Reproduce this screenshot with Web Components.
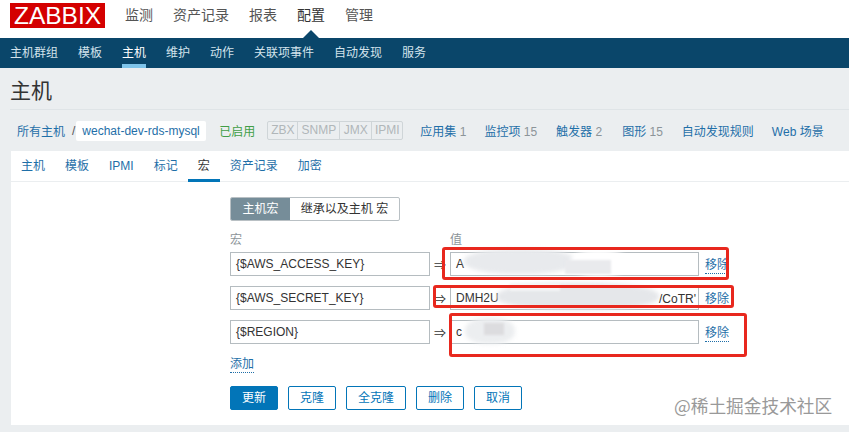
<!DOCTYPE html>
<html lang="zh"><head><meta charset="utf-8"><title>主机</title>
<style>
html,body{margin:0;padding:0;background:#ebeef0;font:12px "Liberation Sans","Noto Sans CJK SC",sans-serif;overflow:hidden}
body{width:849px;height:432px;position:relative}
</style></head><body>
<z-topbar></z-topbar>
<z-subnav></z-subnav>
<z-title>主机</z-title>
<z-crumbs></z-crumbs>
<z-card></z-card>
<z-marks></z-marks>
<script>
const FONT='"Liberation Sans","Noto Sans CJK SC",sans-serif';
class Base extends HTMLElement{
  constructor(){super();this.attachShadow({mode:'open'}).innerHTML=`<style>${this.css()}</style>${this.html()}`}
  css(){return ''} html(){return '<slot></slot>'}
}
customElements.define('z-topbar',class extends Base{
  css(){return `:host{display:flex;align-items:flex-start;height:38px;background:#fff;position:relative;font:14px ${FONT};color:#555}
  .logo{margin:3px 20px 0 10px;width:95px;height:25px;background:#d40000;color:#fff;font:24.5px/25px "Liberation Sans",sans-serif;text-align:center;overflow:hidden}
  nav{display:flex;gap:20px;line-height:20px;padding-top:5px}
  .on{color:#333}
  .tri{position:absolute;left:303px;top:30px;width:0;height:0;border:8px solid transparent;border-top:0;border-bottom-color:#0a466a}`}
  html(){return `<div class="logo">ZABBIX</div><nav><span>监测</span><span>资产记录</span><span>报表</span><span class="on">配置</span><span>管理</span></nav><div class="tri"></div>`}
});
customElements.define('z-subnav',class extends Base{
  css(){return `:host{display:flex;gap:20px;height:30px;box-sizing:border-box;padding-left:10px;background:#0a466a;color:#d3e3ec;font:12px/30px ${FONT}}
  span{height:30px;box-sizing:border-box}
  .on{color:#fff;border-bottom:4px solid #7ec4ea;line-height:30px}`}
  html(){return ['主机群组','模板','主机','维护','动作','关联项事件','自动发现','服务'].map(t=>`<span class="${t=='主机'?'on':''}">${t}</span>`).join('')}
});
customElements.define('z-title',class extends Base{
  css(){return `:host{display:block;margin:0 0 0 10px;height:42px;box-sizing:border-box;padding-top:9px;border-bottom:1px solid #dfe4e7;font:21px/28px ${FONT};color:#333}`}
});
customElements.define('z-crumbs',class extends Base{
  css(){return `:host{display:flex;align-items:center;height:41px;padding-left:17px;font:12px ${FONT};color:#1f6fa8}
  .sep{color:#555;margin:0 1px 0 7px}
  .pill{background:#fff;height:20px;line-height:20px;padding:0 6px;width:118px;white-space:nowrap;border-radius:2px;margin-right:13px}
  .en{color:#429e47;margin-right:12px;width:36px}
  .b{display:flex;height:17px;border:1px solid #cfd5d8;border-radius:2px;color:#b0b6b9;line-height:17px;margin-right:17px}
  .b span{padding:0 2.5px;border-left:1px solid #cfd5d8;text-align:center;box-sizing:border-box}
  .b span:first-child{border-left:0}
  .l{white-space:nowrap}
  i{font-style:normal;color:#8c9499}`}
  html(){return `<span>所有主机</span><span class="sep">/</span><span class="pill">wechat-dev-rds-mysql</span><span class="en">已启用</span>
  <div class="b"><span style="width:29px">ZBX</span><span style="width:42px">SNMP</span><span style="width:32px">JMX</span><span style="width:31px">IPMI</span></div>
  <span class="l" style="margin-right:18px">应用集 <i>1</i></span><span class="l" style="margin-right:19px">监控项 <i>15</i></span><span class="l" style="margin-right:20px">触发器 <i>2</i></span><span class="l" style="margin-right:19px">图形 <i>15</i></span><span class="l" style="margin-right:18px">自动发现规则</span><span class="l">Web 场景</span>`}
});
customElements.define('z-tabs',class extends Base{
  css(){return `:host{display:flex;height:31px;box-sizing:border-box;border-bottom:1px solid #ebeef0;padding-left:0;font:12px/30px ${FONT};color:#1f6fa8}
  span{padding:0 10px;height:31px;box-sizing:border-box}
  .on{color:#333;border-bottom:3px solid #0275b8;width:32px;padding:0;text-align:center}`}
  html(){return ['主机','模板','IPMI','标记','宏','资产记录','加密'].map(t=>`<span class="${t=='宏'?'on':''}">${t}</span>`).join('')}
});
customElements.define('z-toggle',class extends Base{
  css(){return `:host{display:flex;width:170px;height:24px;box-sizing:border-box;border:1px solid #b9c0c4;border-radius:2px;font:12px/22px ${FONT};color:#333;background:#fff;overflow:hidden}
  span{text-align:center}
  .a{width:59px;background:#768d99;color:#fff}
  .b{flex:1}`}
  html(){return `<span class="a">主机宏</span><span class="b">继承以及主机 宏</span>`}
});
customElements.define('z-macro-row',class extends Base{
  css(){return `:host{display:flex;align-items:center;height:24px;margin-bottom:10px;font:12px ${FONT};color:#333}
  .i{box-sizing:border-box;height:24px;line-height:22px;border:1px solid #b5bcc0;padding:0 5px;white-space:nowrap;overflow:hidden;background:#fff}
  .k{width:200px}.v{width:249px}
  .ar{width:20px;text-align:center;font-size:12px}
  a{margin:3px 0 0 6px;color:#1f6fa8;border-bottom:1px dotted #1f6fa8;line-height:15px}`}
  html(){return `<div class="i k">${this.getAttribute('k')}</div><div class="ar">⇒</div><div class="i v">${this.getAttribute('v')}</div><a>移除</a>`}
});
customElements.define('z-btn',class extends Base{
  css(){return `:host{display:block;box-sizing:border-box;height:24px;border:1px solid #0275b8;border-radius:2px;padding:0 11px;font:12px/22px ${FONT};color:#0275b8;background:#fff;text-align:center}
  :host([primary]){background:#0275b8;color:#fff}`}
});
customElements.define('z-card',class extends Base{
  css(){return `:host{display:block;margin-left:11px;height:274px;background:#fff;font:12px ${FONT}}
  .f{padding:15px 0 0 219px}
  .h{display:flex;color:#8c9499;line-height:16px;margin:11px 0 4px}
  .h span:first-child{width:220px}
  .add{display:inline-block;color:#1f6fa8;border-bottom:1px dotted #1f6fa8;line-height:15px;margin-top:3px}
  .btns{display:flex;gap:10px;margin-top:13px}`}
  html(){return `<z-tabs></z-tabs><div class="f"><z-toggle></z-toggle>
  <div class="h"><span>宏</span><span>值</span></div>
  <z-macro-row k="{$AWS_ACCESS_KEY}" v="A"></z-macro-row>
  <z-macro-row k="{$AWS_SECRET_KEY}" v="DMH2U"></z-macro-row>
  <z-macro-row k="{$REGION}" v="c"></z-macro-row>
  <a class="add">添加</a>
  <div class="btns"><z-btn primary>更新</z-btn><z-btn>克隆</z-btn><z-btn>全克隆</z-btn><z-btn>删除</z-btn><z-btn>取消</z-btn></div></div>`}
});
customElements.define('z-marks',class extends Base{
  css(){return `:host{display:block;position:absolute;inset:0;pointer-events:none;overflow:hidden}
  .r{position:absolute;box-sizing:border-box;border:3px solid #e8281e;border-radius:3px}
  .s{position:absolute;border-radius:45%;filter:blur(2px)}
  .q{position:absolute;filter:blur(1px)}
  .t{position:absolute;left:674px;top:394px;font:17.7px/22px "Noto Sans CJK SC",sans-serif;color:#999;white-space:nowrap}
  .v{position:absolute;left:659px;top:292px;font:12px/14px ${FONT};color:#333;white-space:nowrap}`}
  html(){return `
  <div class="s" style="left:464px;top:249px;width:112px;height:25px;background:#e8eaed"></div>
  <div class="s" style="left:570px;top:250px;width:58px;height:26px;background:#fff"></div>
  <div class="q" style="left:565px;top:260px;width:46px;height:14px;background:#e9eaed"></div>
  <div class="s" style="left:497px;top:283px;width:162px;height:27px;background:#e5e7ea"></div>
  <div class="q" style="left:510px;top:283px;width:50px;height:8px;background:#f4f5f6"></div>
  <div class="s" style="left:465px;top:318px;width:50px;height:26px;background:#eceef0"></div>
  <div class="q" style="left:484px;top:323px;width:20px;height:12px;background:#dcdcdf"></div>
  <div class="v">/CoTR'</div>
  <div class="r" style="left:442px;top:247px;width:287px;height:33px"></div>
  <div class="r" style="left:433px;top:285px;width:301px;height:23px"></div>
  <div class="r" style="left:449px;top:313px;width:298px;height:44px"></div>
  <div class="t">@稀土掘金技术社区</div>`}
});
</script></body></html>
